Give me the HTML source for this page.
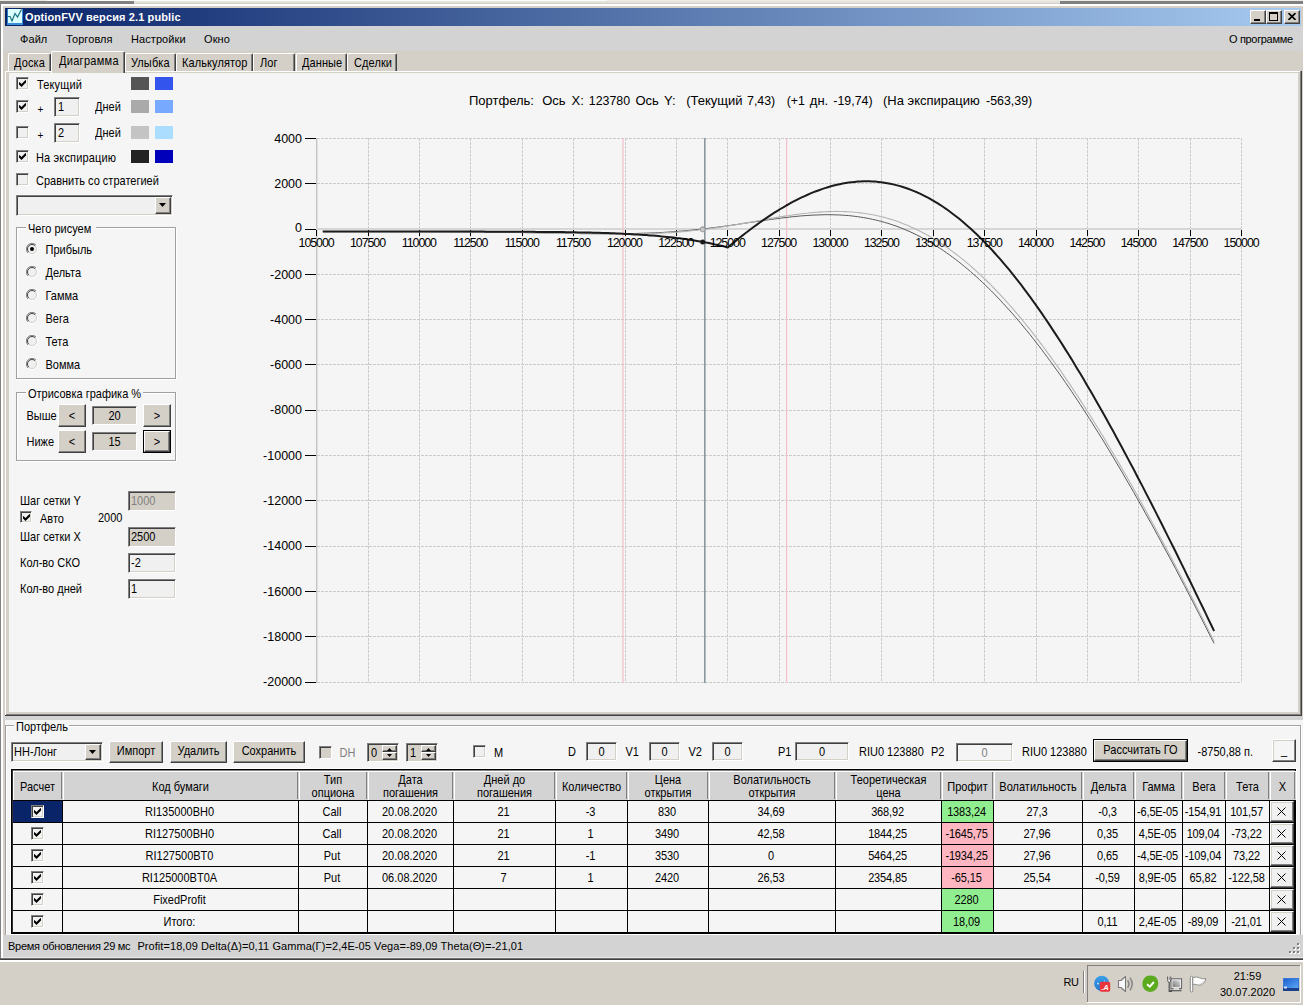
<!DOCTYPE html>
<html><head><meta charset="utf-8"><title>OptionFVV</title>
<style>
html,body{margin:0;padding:0;}
body{width:1303px;height:1005px;overflow:hidden;position:relative;background:#d4d0c8;font-family:"Liberation Sans",sans-serif;font-size:11px;}
body>div,body>span,body>svg{position:absolute;box-sizing:content-box;}
.t{line-height:1;white-space:nowrap;transform-origin:0 84.65%;}
.sk{border:2px solid;border-color:#808080 #fff #fff #808080;box-shadow:inset 1px 1px 0 #404040, inset -1px -1px 0 #d4d0c8;border-width:1px;padding:1px;background-clip:padding-box;}
.rs{border:1px solid;border-color:#fff #404040 #404040 #fff;box-shadow:inset -1px -1px 0 #808080, inset 1px 1px 0 #d4d0c8;padding:1px;}
svg text{font-family:"Liberation Sans",sans-serif;fill:#000;}
</style></head><body>
<div style="left:0;top:0;width:1303px;height:1005px;background:#d4d0c8"></div>
<div style="left:0px;top:0px;width:1303px;height:1px;background:#ecebe6;"></div>
<div style="left:47px;top:0px;width:560px;height:1px;background:#fbfbfa;"></div>
<div style="left:0px;top:1px;width:134px;height:3px;background:#808080;"></div>
<div style="left:134px;top:1px;width:926px;height:2px;background:#e4e2dc;"></div>
<div style="left:1060px;top:1px;width:243px;height:3px;background:#808080;"></div>
<div style="left:134px;top:3px;width:926px;height:1px;background:#d4d0c8;"></div>
<div style="left:1px;top:4px;width:1302px;height:2px;background:#fff;"></div>
<div style="left:0px;top:3px;width:1px;height:957px;background:#808080;"></div>
<div style="left:1px;top:4px;width:2px;height:955px;background:#fff;"></div>
<div style="left:5px;top:8px;width:1296px;height:18px;background:linear-gradient(to right,#0a246a,#a6caf0);"></div>
<svg style="left:7px;top:9px" width="16" height="16" viewBox="0 0 16 16"><rect x="0" y="0" width="16" height="16" fill="#3a8ed8"/><rect x="0" y="0" width="15" height="14" fill="#dcffff"/><rect x="0" y="0" width="1" height="14" fill="#2a7ac8"/><path d="M0.5 7.5 L3 7.5 L5 12 L8 4.5 L10.5 8 L14.5 0.5" stroke="#1a7080" stroke-width="1.2" fill="none"/></svg>
<span class="t" style="left:25px;top:12.19px;font-size:11px;color:#fff;letter-spacing:0.12px;font-weight:bold;transform:scaleY(1.02);">OptionFVV версия 2.1 public</span>
<div class="rs" style="left:1250px;top:10px;width:12px;height:10px;background:#d4d0c8"></div>
<div style="left:1254px;top:19px;width:6px;height:2px;background:#000;"></div>
<div class="rs" style="left:1266px;top:10px;width:12px;height:10px;background:#d4d0c8"></div>
<div style="left:1269px;top:12px;width:7px;height:6px;border:1px solid #000;border-top-width:2px"></div>
<div class="rs" style="left:1284px;top:10px;width:12px;height:10px;background:#d4d0c8"></div>
<svg style="left:1288px;top:13px" width="8" height="7" viewBox="0 0 8 7"><path d="M0.5 0 L7.5 7 M7.5 0 L0.5 7" stroke="#000" stroke-width="1.6"/></svg>
<div style="left:3px;top:26px;width:1300px;height:25px;background:#d3d3d3;"></div>
<span class="t" style="left:20px;top:34.19px;font-size:11px;color:#000;letter-spacing:0.08px;transform:scaleY(1.02);">Файл</span>
<span class="t" style="left:66px;top:34.19px;font-size:11px;color:#000;letter-spacing:0.08px;transform:scaleY(1.02);">Торговля</span>
<span class="t" style="left:131px;top:34.19px;font-size:11px;color:#000;letter-spacing:0.08px;transform:scaleY(1.02);">Настройки</span>
<span class="t" style="left:204px;top:34.19px;font-size:11px;color:#000;letter-spacing:0.08px;transform:scaleY(1.02);">Окно</span>
<span class="t" style="left:1229px;top:34.19px;font-size:11px;color:#000;letter-spacing:-0.33px;transform:scaleY(1.02);">О программе</span>
<div style="left:5px;top:71px;width:1297px;height:1px;background:#fff;"></div>
<div style="left:5px;top:71px;width:1px;height:645px;background:#fff;"></div>
<div style="left:6px;top:72px;width:1294px;height:642px;background:#d4d0c8;"></div>
<div style="left:1300px;top:71px;width:1px;height:645px;background:#808080;"></div>
<div style="left:1301px;top:71px;width:1px;height:645px;background:#404040;"></div>
<div style="left:6px;top:714px;width:1295px;height:1px;background:#808080;"></div>
<div style="left:5px;top:715px;width:1297px;height:1px;background:#404040;"></div>
<div style="left:9px;top:73px;width:1289px;height:639px;background:#f5f5f5;"></div>
<div style="left:8px;top:53px;width:41px;height:17px;background:#d4d0c8;border-left:1px solid #fff;border-top:1px solid #fff;border-right:1px solid #404040;border-radius:2px 2px 0 0;box-shadow:inset -1px 0 0 #808080"></div>
<span class="t" style="left:14px;top:57.69px;font-size:11px;color:#000;letter-spacing:0.1px;transform:scaleY(1.13);">Доска</span>
<div style="left:125px;top:53px;width:49px;height:17px;background:#d4d0c8;border-left:1px solid #fff;border-top:1px solid #fff;border-right:1px solid #404040;border-radius:2px 2px 0 0;box-shadow:inset -1px 0 0 #808080"></div>
<span class="t" style="left:131px;top:57.69px;font-size:11px;color:#000;letter-spacing:0.1px;transform:scaleY(1.13);">Улыбка</span>
<div style="left:176px;top:53px;width:75px;height:17px;background:#d4d0c8;border-left:1px solid #fff;border-top:1px solid #fff;border-right:1px solid #404040;border-radius:2px 2px 0 0;box-shadow:inset -1px 0 0 #808080"></div>
<span class="t" style="left:182px;top:57.69px;font-size:11px;color:#000;letter-spacing:0.1px;transform:scaleY(1.13);">Калькулятор</span>
<div style="left:253px;top:53px;width:40px;height:17px;background:#d4d0c8;border-left:1px solid #fff;border-top:1px solid #fff;border-right:1px solid #404040;border-radius:2px 2px 0 0;box-shadow:inset -1px 0 0 #808080"></div>
<span class="t" style="left:260px;top:57.69px;font-size:11px;color:#000;letter-spacing:0.1px;transform:scaleY(1.13);">Лог</span>
<div style="left:296px;top:53px;width:49px;height:17px;background:#d4d0c8;border-left:1px solid #fff;border-top:1px solid #fff;border-right:1px solid #404040;border-radius:2px 2px 0 0;box-shadow:inset -1px 0 0 #808080"></div>
<span class="t" style="left:302px;top:57.69px;font-size:11px;color:#000;letter-spacing:0.1px;transform:scaleY(1.13);">Данные</span>
<div style="left:347px;top:53px;width:48px;height:17px;background:#d4d0c8;border-left:1px solid #fff;border-top:1px solid #fff;border-right:1px solid #404040;border-radius:2px 2px 0 0;box-shadow:inset -1px 0 0 #808080"></div>
<span class="t" style="left:354px;top:57.69px;font-size:11px;color:#000;letter-spacing:0.1px;transform:scaleY(1.13);">Сделки</span>
<div style="left:51px;top:51px;width:72px;height:21px;background:#d4d0c8;border-left:1px solid #fff;border-top:1px solid #fff;border-right:1px solid #404040;border-radius:2px 2px 0 0;box-shadow:inset -1px 0 0 #808080"></div>
<span class="t" style="left:59px;top:55.69px;font-size:11px;color:#000;letter-spacing:0.3px;transform:scaleY(1.13);">Диаграмма</span>
<div class="sk" style="left:16px;top:77px;width:9px;height:9px;background:#f0f0f0"></div>
<svg style="left:19px;top:80px" width="7" height="7" viewBox="0 0 7 7"><path d="M0.5 2.5 L2.5 4.5 L6.5 0.5" stroke="#000" stroke-width="2" fill="none" stroke-linecap="square" transform="translate(0,1)"/></svg>
<span class="t" style="left:37px;top:79.69px;font-size:11px;color:#000;letter-spacing:0.15px;transform:scaleY(1.13);">Текущий</span>
<div class="sk" style="left:16px;top:100px;width:9px;height:9px;background:#f0f0f0"></div>
<svg style="left:19px;top:103px" width="7" height="7" viewBox="0 0 7 7"><path d="M0.5 2.5 L2.5 4.5 L6.5 0.5" stroke="#000" stroke-width="2" fill="none" stroke-linecap="square" transform="translate(0,1)"/></svg>
<span class="t" style="left:37.5px;top:104.53px;font-size:10px;color:#000;">+</span>
<div class="sk" style="left:54px;top:97px;width:22px;height:16px;background:#f0f0f0"></div>
<span class="t" style="left:58px;top:102.19px;font-size:11px;color:#000;transform:scaleY(1.13);">1</span>
<span class="t" style="left:95px;top:102.19px;font-size:11px;color:#000;transform:scaleY(1.13);">Дней</span>
<div class="sk" style="left:16px;top:126px;width:9px;height:9px;background:#f0f0f0"></div>
<span class="t" style="left:37.5px;top:130.53px;font-size:10px;color:#000;">+</span>
<div class="sk" style="left:54px;top:123px;width:22px;height:16px;background:#f0f0f0"></div>
<span class="t" style="left:58px;top:128.19px;font-size:11px;color:#000;transform:scaleY(1.13);">2</span>
<span class="t" style="left:95px;top:128.19px;font-size:11px;color:#000;transform:scaleY(1.13);">Дней</span>
<div class="sk" style="left:16px;top:150px;width:9px;height:9px;background:#f0f0f0"></div>
<svg style="left:19px;top:153px" width="7" height="7" viewBox="0 0 7 7"><path d="M0.5 2.5 L2.5 4.5 L6.5 0.5" stroke="#000" stroke-width="2" fill="none" stroke-linecap="square" transform="translate(0,1)"/></svg>
<span class="t" style="left:36px;top:152.69px;font-size:11px;color:#000;letter-spacing:0.15px;transform:scaleY(1.13);">На экспирацию</span>
<div class="sk" style="left:16px;top:173px;width:9px;height:9px;background:#f0f0f0"></div>
<span class="t" style="left:36px;top:176.19px;font-size:11px;color:#000;transform:scaleY(1.13);">Сравнить со стратегией</span>
<div style="left:131px;top:77px;width:18px;height:13px;background:#555555;"></div>
<div style="left:155px;top:77px;width:18px;height:13px;background:#3355ee;"></div>
<div style="left:131px;top:100px;width:18px;height:13px;background:#aaaaaa;"></div>
<div style="left:155px;top:100px;width:18px;height:13px;background:#77aaff;"></div>
<div style="left:131px;top:126px;width:18px;height:13px;background:#c4c4c4;"></div>
<div style="left:155px;top:126px;width:18px;height:13px;background:#aaddff;"></div>
<div style="left:131px;top:150px;width:18px;height:13px;background:#222222;"></div>
<div style="left:155px;top:150px;width:18px;height:13px;background:#0000bb;"></div>
<div class="sk" style="left:16px;top:195px;width:153px;height:17px;background:#f0f0f0"></div>
<div class="rs" style="left:155px;top:197px;width:12px;height:13px;background:#d4d0c8"></div>
<svg style="left:159px;top:203px" width="7" height="4" viewBox="0 0 7 4"><path d="M0 0 L7 0 L3.5 4 Z" fill="#000"/></svg>
<div style="left:16px;top:227px;width:158px;height:150px;border:1px solid #a0a0a0;box-shadow:1px 1px 0 #fff, inset 1px 1px 0 #fff;"></div>
<div style="left:26px;top:225px;width:70px;height:5px;background:#f5f5f5;"></div>
<span class="t" style="left:28px;top:223.69px;font-size:11px;color:#000;transform:scaleY(1.13);">Чего рисуем</span>
<svg style="left:26px;top:242.5px" width="12" height="12" viewBox="0 0 12 12"><circle cx="6" cy="6" r="5.5" fill="#f0f0f0"/><path d="M10 2 A5.5 5.5 0 0 0 2 10" stroke="#808080" stroke-width="1" fill="none"/><path d="M9.2 2.8 A4.5 4.5 0 0 0 2.8 9.2" stroke="#404040" stroke-width="1" fill="none"/><path d="M2 10 A5.5 5.5 0 0 0 10 2" stroke="#fff" stroke-width="1" fill="none"/><path d="M2.8 9.2 A4.5 4.5 0 0 0 9.2 2.8" stroke="#d4d0c8" stroke-width="1" fill="none"/><circle cx="6" cy="6" r="2" fill="#000"/></svg>
<span class="t" style="left:45.5px;top:244.69px;font-size:11px;color:#000;transform:scaleY(1.13);">Прибыль</span>
<svg style="left:26px;top:265.5px" width="12" height="12" viewBox="0 0 12 12"><circle cx="6" cy="6" r="5.5" fill="#f0f0f0"/><path d="M10 2 A5.5 5.5 0 0 0 2 10" stroke="#808080" stroke-width="1" fill="none"/><path d="M9.2 2.8 A4.5 4.5 0 0 0 2.8 9.2" stroke="#404040" stroke-width="1" fill="none"/><path d="M2 10 A5.5 5.5 0 0 0 10 2" stroke="#fff" stroke-width="1" fill="none"/><path d="M2.8 9.2 A4.5 4.5 0 0 0 9.2 2.8" stroke="#d4d0c8" stroke-width="1" fill="none"/></svg>
<span class="t" style="left:45.5px;top:267.69px;font-size:11px;color:#000;transform:scaleY(1.13);">Дельта</span>
<svg style="left:26px;top:288.5px" width="12" height="12" viewBox="0 0 12 12"><circle cx="6" cy="6" r="5.5" fill="#f0f0f0"/><path d="M10 2 A5.5 5.5 0 0 0 2 10" stroke="#808080" stroke-width="1" fill="none"/><path d="M9.2 2.8 A4.5 4.5 0 0 0 2.8 9.2" stroke="#404040" stroke-width="1" fill="none"/><path d="M2 10 A5.5 5.5 0 0 0 10 2" stroke="#fff" stroke-width="1" fill="none"/><path d="M2.8 9.2 A4.5 4.5 0 0 0 9.2 2.8" stroke="#d4d0c8" stroke-width="1" fill="none"/></svg>
<span class="t" style="left:45.5px;top:290.69px;font-size:11px;color:#000;transform:scaleY(1.13);">Гамма</span>
<svg style="left:26px;top:311.5px" width="12" height="12" viewBox="0 0 12 12"><circle cx="6" cy="6" r="5.5" fill="#f0f0f0"/><path d="M10 2 A5.5 5.5 0 0 0 2 10" stroke="#808080" stroke-width="1" fill="none"/><path d="M9.2 2.8 A4.5 4.5 0 0 0 2.8 9.2" stroke="#404040" stroke-width="1" fill="none"/><path d="M2 10 A5.5 5.5 0 0 0 10 2" stroke="#fff" stroke-width="1" fill="none"/><path d="M2.8 9.2 A4.5 4.5 0 0 0 9.2 2.8" stroke="#d4d0c8" stroke-width="1" fill="none"/></svg>
<span class="t" style="left:45.5px;top:313.69px;font-size:11px;color:#000;transform:scaleY(1.13);">Вега</span>
<svg style="left:26px;top:334.5px" width="12" height="12" viewBox="0 0 12 12"><circle cx="6" cy="6" r="5.5" fill="#f0f0f0"/><path d="M10 2 A5.5 5.5 0 0 0 2 10" stroke="#808080" stroke-width="1" fill="none"/><path d="M9.2 2.8 A4.5 4.5 0 0 0 2.8 9.2" stroke="#404040" stroke-width="1" fill="none"/><path d="M2 10 A5.5 5.5 0 0 0 10 2" stroke="#fff" stroke-width="1" fill="none"/><path d="M2.8 9.2 A4.5 4.5 0 0 0 9.2 2.8" stroke="#d4d0c8" stroke-width="1" fill="none"/></svg>
<span class="t" style="left:45.5px;top:336.69px;font-size:11px;color:#000;transform:scaleY(1.13);">Тета</span>
<svg style="left:26px;top:357.5px" width="12" height="12" viewBox="0 0 12 12"><circle cx="6" cy="6" r="5.5" fill="#f0f0f0"/><path d="M10 2 A5.5 5.5 0 0 0 2 10" stroke="#808080" stroke-width="1" fill="none"/><path d="M9.2 2.8 A4.5 4.5 0 0 0 2.8 9.2" stroke="#404040" stroke-width="1" fill="none"/><path d="M2 10 A5.5 5.5 0 0 0 10 2" stroke="#fff" stroke-width="1" fill="none"/><path d="M2.8 9.2 A4.5 4.5 0 0 0 9.2 2.8" stroke="#d4d0c8" stroke-width="1" fill="none"/></svg>
<span class="t" style="left:45.5px;top:359.69px;font-size:11px;color:#000;transform:scaleY(1.13);">Вомма</span>
<div style="left:16px;top:392px;width:158px;height:67px;border:1px solid #a0a0a0;box-shadow:1px 1px 0 #fff, inset 1px 1px 0 #fff;"></div>
<div style="left:26px;top:390px;width:117px;height:5px;background:#f5f5f5;"></div>
<span class="t" style="left:28px;top:388.69px;font-size:11px;color:#000;transform:scaleY(1.13);">Отрисовка графика %</span>
<span class="t" style="left:26.5px;top:411.19px;font-size:11px;color:#000;transform:scaleY(1.13);">Выше</span>
<span class="t" style="left:26.5px;top:437.19px;font-size:11px;color:#000;transform:scaleY(1.13);">Ниже</span>
<div class="rs" style="left:58px;top:404px;width:24px;height:19px;background:#d4d0c8"></div>
<span class="t" style="left:58px;top:410.69px;font-size:11px;color:#000;width:28px;text-align:center;transform:scaleY(1.13);">&lt;</span>
<div class="rs" style="left:143px;top:404px;width:24px;height:19px;background:#d4d0c8"></div>
<span class="t" style="left:143px;top:410.69px;font-size:11px;color:#000;width:28px;text-align:center;transform:scaleY(1.13);">&gt;</span>
<div class="rs" style="left:58px;top:430px;width:24px;height:19px;background:#d4d0c8"></div>
<span class="t" style="left:58px;top:436.69px;font-size:11px;color:#000;width:28px;text-align:center;transform:scaleY(1.13);">&lt;</span>
<div style="left:143px;top:430px;width:28px;height:23px;background:#000"></div>
<div class="rs" style="left:144px;top:431px;width:22px;height:17px;background:#d4d0c8"></div>
<span class="t" style="left:143px;top:436.69px;font-size:11px;color:#000;width:28px;text-align:center;transform:scaleY(1.13);">&gt;</span>
<div class="sk" style="left:92px;top:406px;width:41px;height:15px;background:#d4d0c8"></div>
<span class="t" style="left:92px;top:411.19px;font-size:11px;color:#000;width:45px;text-align:center;transform:scaleY(1.13);">20</span>
<div class="sk" style="left:92px;top:432px;width:41px;height:15px;background:#d4d0c8"></div>
<span class="t" style="left:92px;top:437.19px;font-size:11px;color:#000;width:45px;text-align:center;transform:scaleY(1.13);">15</span>
<span class="t" style="left:20px;top:496.19px;font-size:11px;color:#000;transform:scaleY(1.13);">Шаг сетки Y</span>
<div class="sk" style="left:128px;top:491px;width:44px;height:16px;background:#d4d0c8"></div>
<span class="t" style="left:131px;top:496.19px;font-size:11px;color:#808080;transform:scaleY(1.13);">1000</span>
<div class="sk" style="left:20px;top:511px;width:8px;height:8px;background:#f0f0f0"></div>
<svg style="left:23px;top:514px" width="7" height="7" viewBox="0 0 7 7"><path d="M0.5 2.5 L2.5 4.5 L6.5 0.5" stroke="#000" stroke-width="2" fill="none" stroke-linecap="square" transform="translate(0,1)"/></svg>
<span class="t" style="left:40px;top:513.69px;font-size:11px;color:#000;transform:scaleY(1.13);">Авто</span>
<span class="t" style="left:98px;top:513.19px;font-size:11px;color:#000;transform:scaleY(1.13);">2000</span>
<span class="t" style="left:20px;top:532.19px;font-size:11px;color:#000;transform:scaleY(1.13);">Шаг сетки X</span>
<div class="sk" style="left:128px;top:527px;width:44px;height:16px;background:#d4d0c8"></div>
<span class="t" style="left:131px;top:532.19px;font-size:11px;color:#000;transform:scaleY(1.13);">2500</span>
<span class="t" style="left:20px;top:557.69px;font-size:11px;color:#000;transform:scaleY(1.13);">Кол-во СКО</span>
<div class="sk" style="left:128px;top:553px;width:44px;height:16px;background:#f0f0f0"></div>
<span class="t" style="left:131px;top:558.19px;font-size:11px;color:#000;transform:scaleY(1.13);">-2</span>
<span class="t" style="left:20px;top:583.69px;font-size:11px;color:#000;transform:scaleY(1.13);">Кол-во дней</span>
<div class="sk" style="left:128px;top:579px;width:44px;height:16px;background:#f0f0f0"></div>
<span class="t" style="left:131px;top:584.19px;font-size:11px;color:#000;transform:scaleY(1.13);">1</span>
<svg style="left:0;top:0" width="1303" height="720" viewBox="0 0 1303 720"><path d="M368.5 138 V683 M419.5 138 V683 M470.5 138 V683 M522.5 138 V683 M573.5 138 V683 M625.5 138 V683 M676.5 138 V683 M727.5 138 V683 M779.5 138 V683 M830.5 138 V683 M881.5 138 V683 M933.5 138 V683 M984.5 138 V683 M1036.5 138 V683 M1087.5 138 V683 M1138.5 138 V683 M1190.5 138 V683 M1241.5 138 V683 M317 138.5 H1242 M317 183.5 H1242 M317 274.5 H1242 M317 319.5 H1242 M317 364.5 H1242 M317 410.5 H1242 M317 455.5 H1242 M317 500.5 H1242 M317 546.5 H1242 M317 591.5 H1242 M317 636.5 H1242 M317 682.5 H1242" stroke="#cbcbcb" stroke-width="1" stroke-dasharray="3 1" fill="none" shape-rendering="crispEdges"/><rect x="316" y="138" width="1.4" height="545" fill="#c4c4c4"/><rect x="316" y="228" width="926" height="2" fill="#d6d6d6"/><path d="M623.0 138 V683" stroke="#f3bfc9" stroke-width="1.2"/><path d="M786.6 138 V683" stroke="#f3bfc9" stroke-width="1.2"/><path d="M704.8 138 V683" stroke="#8a979f" stroke-width="1.6"/><path d="M305 138.5 H316 M305 183.5 H316 M305 229.5 H316 M305 274.5 H316 M305 319.5 H316 M305 364.5 H316 M305 410.5 H316 M305 455.5 H316 M305 500.5 H316 M305 546.5 H316 M305 591.5 H316 M305 636.5 H316 M305 682.5 H316 M316.5 230 V236 M368.5 230 V236 M419.5 230 V236 M470.5 230 V236 M522.5 230 V236 M573.5 230 V236 M625.5 230 V236 M676.5 230 V236 M727.5 230 V236 M779.5 230 V236 M830.5 230 V236 M881.5 230 V236 M933.5 230 V236 M984.5 230 V236 M1036.5 230 V236 M1087.5 230 V236 M1138.5 230 V236 M1190.5 230 V236 M1241.5 230 V236" stroke="#000" stroke-width="1" fill="none"/><polyline points="322.8,231.6 325.8,231.6 328.8,231.6 331.7,231.6 334.7,231.6 337.7,231.6 340.7,231.6 343.6,231.6 346.6,231.6 349.6,231.6 352.5,231.6 355.5,231.6 358.5,231.6 361.4,231.6 364.4,231.6 367.4,231.6 370.4,231.6 373.3,231.6 376.3,231.6 379.3,231.6 382.2,231.6 385.2,231.6 388.2,231.6 391.2,231.7 394.1,231.7 397.1,231.7 400.1,231.7 403.0,231.7 406.0,231.7 409.0,231.7 412.0,231.7 414.9,231.7 417.9,231.7 420.9,231.7 423.8,231.7 426.8,231.7 429.8,231.8 432.7,231.8 435.7,231.8 438.7,231.8 441.7,231.8 444.6,231.8 447.6,231.8 450.6,231.9 453.5,231.9 456.5,231.9 459.5,231.9 462.5,231.9 465.4,231.9 468.4,232.0 471.4,232.0 474.3,232.0 477.3,232.0 480.3,232.1 483.3,232.1 486.2,232.1 489.2,232.2 492.2,232.2 495.1,232.2 498.1,232.3 501.1,232.3 504.0,232.3 507.0,232.4 510.0,232.4 513.0,232.5 515.9,232.5 518.9,232.5 521.9,232.6 524.8,232.6 527.8,232.7 530.8,232.7 533.8,232.8 536.7,232.8 539.7,232.9 542.7,232.9 545.6,233.0 548.6,233.0 551.6,233.1 554.5,233.1 557.5,233.2 560.5,233.2 563.5,233.3 566.4,233.3 569.4,233.4 572.4,233.4 575.3,233.5 578.3,233.5 581.3,233.6 584.3,233.6 587.2,233.6 590.2,233.7 593.2,233.7 596.1,233.7 599.1,233.7 602.1,233.7 605.1,233.8 608.0,233.8 611.0,233.8 614.0,233.7 616.9,233.7 619.9,233.7 622.9,233.7 625.8,233.6 628.8,233.6 631.8,233.5 634.8,233.5 637.7,233.4 640.7,233.3 643.7,233.2 646.6,233.1 649.6,233.0 652.6,232.9 655.6,232.8 658.5,232.6 661.5,232.5 664.5,232.3 667.4,232.1 670.4,231.9 673.4,231.7 676.4,231.5 679.3,231.2 682.3,231.0 685.3,230.7 688.2,230.5 691.2,230.2 694.2,229.9 697.1,229.6 700.1,229.2 703.1,228.9 706.1,228.6 709.0,228.2 712.0,227.8 715.0,227.5 717.9,227.1 720.9,226.7 723.9,226.3 726.9,225.9 727.8,225.7 729.8,225.5 732.8,225.0 735.8,224.6 738.7,224.2 741.7,223.7 744.7,223.3 747.7,222.8 750.6,222.4 753.6,222.0 756.6,221.5 759.5,221.1 762.5,220.7 765.5,220.2 768.4,219.8 771.4,219.4 774.4,219.0 777.4,218.6 780.3,218.2 783.3,217.8 786.3,217.5 789.2,217.1 792.2,216.8 795.2,216.5 798.2,216.2 801.1,215.9 804.1,215.7 807.1,215.5 810.0,215.3 813.0,215.1 816.0,215.0 819.0,214.9 821.9,214.8 824.9,214.7 827.9,214.7 830.8,214.7 833.8,214.8 836.8,214.9 839.7,215.0 842.7,215.2 845.7,215.4 848.7,215.6 851.6,215.9 854.6,216.3 857.6,216.7 860.5,217.1 863.5,217.6 866.5,218.1 869.5,218.7 872.4,219.3 875.4,219.9 878.4,220.7 881.3,221.4 884.3,222.3 887.3,223.2 890.3,224.1 893.2,225.1 896.2,226.1 899.2,227.2 902.1,228.4 905.1,229.6 908.1,230.9 911.0,232.2 914.0,233.6 917.0,235.1 920.0,236.6 922.9,238.2 925.9,239.8 928.9,241.5 931.8,243.2 934.8,245.0 937.8,246.9 940.8,248.8 943.7,250.8 946.7,252.9 949.7,255.0 952.6,257.2 955.6,259.4 958.6,261.7 961.6,264.1 964.5,266.5 967.5,269.0 970.5,271.5 973.4,274.1 976.4,276.7 979.4,279.5 982.3,282.2 985.3,285.1 988.3,288.0 991.3,290.9 994.2,293.9 997.2,297.0 1000.2,300.1 1003.1,303.3 1006.1,306.6 1009.1,309.9 1012.1,313.2 1015.0,316.6 1018.0,320.1 1021.0,323.6 1023.9,327.2 1026.9,330.8 1029.9,334.5 1032.9,338.2 1035.8,342.0 1038.8,345.8 1041.8,349.7 1044.7,353.7 1047.7,357.7 1050.7,361.7 1053.6,365.8 1056.6,369.9 1059.6,374.1 1062.6,378.3 1065.5,382.6 1068.5,386.9 1071.5,391.3 1074.4,395.7 1077.4,400.2 1080.4,404.7 1083.4,409.2 1086.3,413.8 1089.3,418.5 1092.3,423.1 1095.2,427.9 1098.2,432.6 1101.2,437.4 1104.2,442.2 1107.1,447.1 1110.1,452.0 1113.1,457.0 1116.0,462.0 1119.0,467.0 1122.0,472.0 1124.9,477.1 1127.9,482.3 1130.9,487.4 1133.9,492.6 1136.8,497.8 1139.8,503.1 1142.8,508.4 1145.7,513.7 1148.7,519.1 1151.7,524.4 1154.7,529.9 1157.6,535.3 1160.6,540.8 1163.6,546.3 1166.5,551.8 1169.5,557.3 1172.5,562.9 1175.5,568.5 1178.4,574.1 1181.4,579.8 1184.4,585.5 1187.3,591.2 1190.3,596.9 1193.3,602.6 1196.2,608.4 1199.2,614.2 1202.2,620.0 1205.2,625.8 1208.1,631.7 1211.1,637.5 1214.1,643.4" stroke="#5a5a5a" stroke-width="1" fill="none"/><polyline points="322.8,231.6 325.8,231.6 328.8,231.6 331.7,231.6 334.7,231.6 337.7,231.6 340.7,231.6 343.6,231.6 346.6,231.6 349.6,231.6 352.5,231.6 355.5,231.6 358.5,231.6 361.4,231.6 364.4,231.6 367.4,231.6 370.4,231.6 373.3,231.6 376.3,231.6 379.3,231.6 382.2,231.6 385.2,231.6 388.2,231.6 391.2,231.6 394.1,231.6 397.1,231.6 400.1,231.6 403.0,231.7 406.0,231.7 409.0,231.7 412.0,231.7 414.9,231.7 417.9,231.7 420.9,231.7 423.8,231.7 426.8,231.7 429.8,231.7 432.7,231.7 435.7,231.7 438.7,231.7 441.7,231.8 444.6,231.8 447.6,231.8 450.6,231.8 453.5,231.8 456.5,231.8 459.5,231.8 462.5,231.9 465.4,231.9 468.4,231.9 471.4,231.9 474.3,231.9 477.3,232.0 480.3,232.0 483.3,232.0 486.2,232.0 489.2,232.1 492.2,232.1 495.1,232.1 498.1,232.2 501.1,232.2 504.0,232.2 507.0,232.3 510.0,232.3 513.0,232.4 515.9,232.4 518.9,232.4 521.9,232.5 524.8,232.5 527.8,232.6 530.8,232.6 533.8,232.7 536.7,232.7 539.7,232.8 542.7,232.8 545.6,232.9 548.6,233.0 551.6,233.0 554.5,233.1 557.5,233.1 560.5,233.2 563.5,233.3 566.4,233.3 569.4,233.4 572.4,233.4 575.3,233.5 578.3,233.5 581.3,233.6 584.3,233.7 587.2,233.7 590.2,233.8 593.2,233.8 596.1,233.9 599.1,233.9 602.1,233.9 605.1,234.0 608.0,234.0 611.0,234.0 614.0,234.0 616.9,234.0 619.9,234.0 622.9,234.0 625.8,234.0 628.8,234.0 631.8,234.0 634.8,233.9 637.7,233.9 640.7,233.8 643.7,233.8 646.6,233.7 649.6,233.6 652.6,233.5 655.6,233.4 658.5,233.2 661.5,233.1 664.5,232.9 667.4,232.8 670.4,232.6 673.4,232.4 676.4,232.2 679.3,231.9 682.3,231.7 685.3,231.4 688.2,231.1 691.2,230.8 694.2,230.5 697.1,230.2 700.1,229.8 703.1,229.5 706.1,229.1 709.0,228.7 712.0,228.3 715.0,227.9 717.9,227.5 720.9,227.0 723.9,226.6 726.9,226.1 727.8,226.0 729.8,225.6 732.8,225.2 735.8,224.7 738.7,224.2 741.7,223.6 744.7,223.1 747.7,222.6 750.6,222.1 753.6,221.6 756.6,221.0 759.5,220.5 762.5,220.0 765.5,219.4 768.4,218.9 771.4,218.4 774.4,217.9 777.4,217.4 780.3,216.9 783.3,216.4 786.3,215.9 789.2,215.5 792.2,215.0 795.2,214.6 798.2,214.2 801.1,213.8 804.1,213.5 807.1,213.2 810.0,212.8 813.0,212.6 816.0,212.3 819.0,212.1 821.9,211.9 824.9,211.7 827.9,211.6 830.8,211.5 833.8,211.5 836.8,211.4 839.7,211.5 842.7,211.5 845.7,211.6 848.7,211.8 851.6,212.0 854.6,212.2 857.6,212.5 860.5,212.9 863.5,213.3 866.5,213.7 869.5,214.2 872.4,214.7 875.4,215.3 878.4,216.0 881.3,216.7 884.3,217.4 887.3,218.3 890.3,219.1 893.2,220.1 896.2,221.1 899.2,222.1 902.1,223.2 905.1,224.4 908.1,225.6 911.0,226.9 914.0,228.3 917.0,229.7 920.0,231.2 922.9,232.7 925.9,234.3 928.9,236.0 931.8,237.7 934.8,239.5 937.8,241.3 940.8,243.3 943.7,245.2 946.7,247.3 949.7,249.4 952.6,251.6 955.6,253.8 958.6,256.1 961.6,258.4 964.5,260.9 967.5,263.4 970.5,265.9 973.4,268.5 976.4,271.2 979.4,273.9 982.3,276.7 985.3,279.5 988.3,282.5 991.3,285.4 994.2,288.5 997.2,291.6 1000.2,294.7 1003.1,297.9 1006.1,301.2 1009.1,304.5 1012.1,307.9 1015.0,311.3 1018.0,314.8 1021.0,318.4 1023.9,322.0 1026.9,325.7 1029.9,329.4 1032.9,333.2 1035.8,337.0 1038.8,340.9 1041.8,344.8 1044.7,348.8 1047.7,352.8 1050.7,356.9 1053.6,361.0 1056.6,365.2 1059.6,369.4 1062.6,373.7 1065.5,378.1 1068.5,382.4 1071.5,386.9 1074.4,391.3 1077.4,395.8 1080.4,400.4 1083.4,405.0 1086.3,409.6 1089.3,414.3 1092.3,419.0 1095.2,423.8 1098.2,428.6 1101.2,433.5 1104.2,438.4 1107.1,443.3 1110.1,448.2 1113.1,453.3 1116.0,458.3 1119.0,463.4 1122.0,468.5 1124.9,473.6 1127.9,478.8 1130.9,484.0 1133.9,489.3 1136.8,494.6 1139.8,499.9 1142.8,505.2 1145.7,510.6 1148.7,516.0 1151.7,521.4 1154.7,526.9 1157.6,532.4 1160.6,537.9 1163.6,543.4 1166.5,549.0 1169.5,554.6 1172.5,560.2 1175.5,565.9 1178.4,571.6 1181.4,577.3 1184.4,583.0 1187.3,588.7 1190.3,594.5 1193.3,600.3 1196.2,606.1 1199.2,611.9 1202.2,617.8 1205.2,623.7 1208.1,629.6 1211.1,635.5 1214.1,641.4" stroke="#b4b4b4" stroke-width="1.1" fill="none"/><polyline points="322.8,231.6 325.8,231.6 328.8,231.6 331.7,231.6 334.7,231.6 337.7,231.6 340.7,231.6 343.6,231.6 346.6,231.6 349.6,231.6 352.5,231.6 355.5,231.6 358.5,231.6 361.4,231.6 364.4,231.6 367.4,231.6 370.4,231.6 373.3,231.6 376.3,231.6 379.3,231.6 382.2,231.6 385.2,231.6 388.2,231.6 391.2,231.6 394.1,231.6 397.1,231.6 400.1,231.6 403.0,231.6 406.0,231.6 409.0,231.6 412.0,231.6 414.9,231.6 417.9,231.6 420.9,231.6 423.8,231.6 426.8,231.6 429.8,231.6 432.7,231.6 435.7,231.6 438.7,231.6 441.7,231.6 444.6,231.6 447.6,231.6 450.6,231.6 453.5,231.6 456.5,231.6 459.5,231.6 462.5,231.6 465.4,231.6 468.4,231.6 471.4,231.6 474.3,231.6 477.3,231.6 480.3,231.6 483.3,231.6 486.2,231.7 489.2,231.7 492.2,231.7 495.1,231.7 498.1,231.7 501.1,231.7 504.0,231.7 507.0,231.7 510.0,231.7 513.0,231.7 515.9,231.7 518.9,231.7 521.9,231.8 524.8,231.8 527.8,231.8 530.8,231.8 533.8,231.8 536.7,231.9 539.7,231.9 542.7,231.9 545.6,231.9 548.6,231.9 551.6,232.0 554.5,232.0 557.5,232.0 560.5,232.1 563.5,232.1 566.4,232.2 569.4,232.2 572.4,232.2 575.3,232.3 578.3,232.4 581.3,232.4 584.3,232.5 587.2,232.5 590.2,232.6 593.2,232.7 596.1,232.8 599.1,232.8 602.1,232.9 605.1,233.0 608.0,233.1 611.0,233.2 614.0,233.3 616.9,233.5 619.9,233.6 622.9,233.7 625.8,233.9 628.8,234.0 631.8,234.2 634.8,234.4 637.7,234.5 640.7,234.7 643.7,234.9 646.6,235.1 649.6,235.4 652.6,235.6 655.6,235.8 658.5,236.1 661.5,236.4 664.5,236.7 667.4,237.0 670.4,237.3 673.4,237.6 676.4,238.0 679.3,238.3 682.3,238.7 685.3,239.1 688.2,239.6 691.2,240.0 694.2,240.5 697.1,241.0 700.1,241.5 703.1,242.0 706.1,242.6 709.0,243.1 712.0,243.7 715.0,244.4 717.9,245.0 720.9,245.7 723.9,246.4 726.9,247.2 727.8,247.4 729.8,245.8 732.8,243.3 735.8,240.9 738.7,238.5 741.7,236.1 744.7,233.8 747.7,231.5 750.6,229.2 753.6,227.0 756.6,224.9 759.5,222.7 762.5,220.6 765.5,218.6 768.4,216.6 771.4,214.6 774.4,212.7 777.4,210.8 780.3,209.0 783.3,207.3 786.3,205.5 789.2,203.9 792.2,202.2 795.2,200.7 798.2,199.2 801.1,197.7 804.1,196.3 807.1,195.0 810.0,193.7 813.0,192.4 816.0,191.3 819.0,190.2 821.9,189.1 824.9,188.1 827.9,187.2 830.8,186.3 833.8,185.5 836.8,184.8 839.7,184.2 842.7,183.6 845.7,183.0 848.7,182.6 851.6,182.2 854.6,181.9 857.6,181.6 860.5,181.4 863.5,181.3 866.5,181.3 869.5,181.3 872.4,181.5 875.4,181.6 878.4,181.9 881.3,182.2 884.3,182.7 887.3,183.2 890.3,183.7 893.2,184.4 896.2,185.1 899.2,185.9 902.1,186.8 905.1,187.7 908.1,188.8 911.0,189.9 914.0,191.1 917.0,192.3 920.0,193.7 922.9,195.1 925.9,196.6 928.9,198.2 931.8,199.9 934.8,201.6 937.8,203.4 940.8,205.3 943.7,207.3 946.7,209.3 949.7,211.5 952.6,213.7 955.6,216.0 958.6,218.3 961.6,220.8 964.5,223.3 967.5,225.9 970.5,228.5 973.4,231.3 976.4,234.1 979.4,237.0 982.3,239.9 985.3,243.0 988.3,246.1 991.3,249.2 994.2,252.5 997.2,255.8 1000.2,259.2 1003.1,262.6 1006.1,266.1 1009.1,269.7 1012.1,273.4 1015.0,277.1 1018.0,280.9 1021.0,284.7 1023.9,288.6 1026.9,292.6 1029.9,296.7 1032.9,300.8 1035.8,304.9 1038.8,309.1 1041.8,313.4 1044.7,317.7 1047.7,322.1 1050.7,326.6 1053.6,331.1 1056.6,335.6 1059.6,340.2 1062.6,344.9 1065.5,349.6 1068.5,354.3 1071.5,359.1 1074.4,364.0 1077.4,368.9 1080.4,373.8 1083.4,378.8 1086.3,383.9 1089.3,388.9 1092.3,394.1 1095.2,399.2 1098.2,404.4 1101.2,409.7 1104.2,415.0 1107.1,420.3 1110.1,425.7 1113.1,431.1 1116.0,436.5 1119.0,442.0 1122.0,447.5 1124.9,453.0 1127.9,458.6 1130.9,464.2 1133.9,469.8 1136.8,475.5 1139.8,481.2 1142.8,486.9 1145.7,492.6 1148.7,498.4 1151.7,504.2 1154.7,510.1 1157.6,515.9 1160.6,521.8 1163.6,527.7 1166.5,533.6 1169.5,539.6 1172.5,545.5 1175.5,551.5 1178.4,557.5 1181.4,563.6 1184.4,569.6 1187.3,575.7 1190.3,581.8 1193.3,587.9 1196.2,594.0 1199.2,600.1 1202.2,606.3 1205.2,612.4 1208.1,618.6 1211.1,624.8 1214.1,631.0" stroke="#1c1c1c" stroke-width="2" fill="none" stroke-linejoin="round"/><circle cx="702.7" cy="228.9" r="2.5" fill="#666"/><circle cx="702.7" cy="229.5" r="2.4" fill="#c8c8c8" stroke="#9a9a9a" stroke-width="0.9"/><circle cx="702.7" cy="241.9" r="2.5" fill="#1c1c1c"/><text x="302" y="142.6" text-anchor="end" font-size="12.5">4000</text><text x="302" y="187.9" text-anchor="end" font-size="12.5">2000</text><text x="302" y="231.6" text-anchor="end" font-size="12.5">0</text><text x="302" y="278.5" text-anchor="end" font-size="12.5">-2000</text><text x="302" y="323.8" text-anchor="end" font-size="12.5">-4000</text><text x="302" y="369.1" text-anchor="end" font-size="12.5">-6000</text><text x="302" y="414.4" text-anchor="end" font-size="12.5">-8000</text><text x="302" y="459.7" text-anchor="end" font-size="12.5">-10000</text><text x="302" y="505.0" text-anchor="end" font-size="12.5">-12000</text><text x="302" y="550.3" text-anchor="end" font-size="12.5">-14000</text><text x="302" y="595.6" text-anchor="end" font-size="12.5">-16000</text><text x="302" y="640.9" text-anchor="end" font-size="12.5">-18000</text><text x="302" y="686.2" text-anchor="end" font-size="12.5">-20000</text><text x="316.1" y="246.9" text-anchor="middle" font-size="12.4" letter-spacing="-1.05">105000</text><text x="367.5" y="246.9" text-anchor="middle" font-size="12.4" letter-spacing="-1.05">107500</text><text x="418.9" y="246.9" text-anchor="middle" font-size="12.4" letter-spacing="-1.05">110000</text><text x="470.3" y="246.9" text-anchor="middle" font-size="12.4" letter-spacing="-1.05">112500</text><text x="521.7" y="246.9" text-anchor="middle" font-size="12.4" letter-spacing="-1.05">115000</text><text x="573.0" y="246.9" text-anchor="middle" font-size="12.4" letter-spacing="-1.05">117500</text><text x="624.4" y="246.9" text-anchor="middle" font-size="12.4" letter-spacing="-1.05">120000</text><text x="675.8" y="246.9" text-anchor="middle" font-size="12.4" letter-spacing="-1.05">122500</text><text x="727.2" y="246.9" text-anchor="middle" font-size="12.4" letter-spacing="-1.05">125000</text><text x="778.6" y="246.9" text-anchor="middle" font-size="12.4" letter-spacing="-1.05">127500</text><text x="830.0" y="246.9" text-anchor="middle" font-size="12.4" letter-spacing="-1.05">130000</text><text x="881.4" y="246.9" text-anchor="middle" font-size="12.4" letter-spacing="-1.05">132500</text><text x="932.8" y="246.9" text-anchor="middle" font-size="12.4" letter-spacing="-1.05">135000</text><text x="984.2" y="246.9" text-anchor="middle" font-size="12.4" letter-spacing="-1.05">137500</text><text x="1035.5" y="246.9" text-anchor="middle" font-size="12.4" letter-spacing="-1.05">140000</text><text x="1086.9" y="246.9" text-anchor="middle" font-size="12.4" letter-spacing="-1.05">142500</text><text x="1138.3" y="246.9" text-anchor="middle" font-size="12.4" letter-spacing="-1.05">145000</text><text x="1189.7" y="246.9" text-anchor="middle" font-size="12.4" letter-spacing="-1.05">147500</text><text x="1241.1" y="246.9" text-anchor="middle" font-size="12.4" letter-spacing="-1.05">150000</text><text y="104.8" font-size="12.7"><tspan x="469" font-size="13">Портфель:</tspan> <tspan x="542.2" font-size="13">Ось</tspan> <tspan x="571.6" font-size="13">X:</tspan> <tspan x="588.8" font-size="12.4">123780</tspan> <tspan x="635.5" font-size="13">Ось</tspan> <tspan x="664.1" font-size="13">Y:</tspan> <tspan x="686.2" font-size="13">(Текущий</tspan> <tspan x="747" font-size="12.4">7,43)</tspan> <tspan x="786.7" font-size="12.4">(+1</tspan> <tspan x="809.8" font-size="13">дн.</tspan> <tspan x="833.3" font-size="12.4">-19,74)</tspan> <tspan x="883" font-size="13">(На</tspan> <tspan x="907.5" font-size="13">экспирацию</tspan> <tspan x="986" font-size="12.4">-563,39)</tspan> </text></svg>
<div style="left:3px;top:716px;width:1300px;height:4px;background:#d3d3d3;"></div>
<div style="left:5px;top:720px;width:1298px;height:215px;background:#f5f5f5;"></div>
<div style="left:5px;top:725px;width:1296px;height:1px;background:#a0a0a0;"></div>
<div style="left:6px;top:726px;width:1295px;height:1px;background:#fff;"></div>
<div style="left:5px;top:725px;width:1px;height:210px;background:#a0a0a0;"></div>
<div style="left:6px;top:726px;width:1px;height:209px;background:#fff;"></div>
<div style="left:1300px;top:725px;width:1px;height:210px;background:#a0a0a0;"></div>
<div style="left:1301px;top:725px;width:1px;height:210px;background:#fff;"></div>
<div style="left:14px;top:722px;width:55px;height:6px;background:#f5f5f5;"></div>
<span class="t" style="left:16px;top:721.69px;font-size:11px;color:#000;transform:scaleY(1.13);">Портфель</span>
<div class="sk" style="left:11px;top:742px;width:88px;height:16px;background:#f0f0f0"></div>
<div class="rs" style="left:85px;top:744px;width:12px;height:12px;background:#d4d0c8"></div>
<svg style="left:89px;top:750px" width="7" height="4" viewBox="0 0 7 4"><path d="M0 0 L7 0 L3.5 4 Z" fill="#000"/></svg>
<span class="t" style="left:14px;top:747.19px;font-size:11px;color:#000;transform:scaleY(1.13);">НН-Лонг</span>
<div class="rs" style="left:109px;top:741px;width:50px;height:18px;background:#d4d0c8"></div>
<span class="t" style="left:109px;top:746.19px;font-size:11px;color:#000;width:54px;text-align:center;transform:scaleY(1.13);">Импорт</span>
<div class="rs" style="left:170px;top:741px;width:53px;height:18px;background:#d4d0c8"></div>
<span class="t" style="left:170px;top:746.19px;font-size:11px;color:#000;width:57px;text-align:center;transform:scaleY(1.13);">Удалить</span>
<div class="rs" style="left:233px;top:741px;width:68px;height:18px;background:#d4d0c8"></div>
<span class="t" style="left:233px;top:746.19px;font-size:11px;color:#000;width:72px;text-align:center;transform:scaleY(1.13);">Сохранить</span>
<div class="sk" style="left:319px;top:746px;width:9px;height:9px;background:#d4d0c8"></div>
<span class="t" style="left:339.5px;top:748.19px;font-size:11px;color:#808080;transform:scaleY(1.13);">DH</span>
<div class="sk" style="left:367px;top:743px;width:28px;height:15px;background:#d4d0c8"></div>
<span class="t" style="left:371px;top:748.19px;font-size:11px;color:#000;transform:scaleY(1.13);">0</span>
<div class="rs" style="left:382px;top:745px;width:11px;height:3px;background:#d4d0c8"></div>
<div class="rs" style="left:382px;top:752px;width:11px;height:4px;background:#d4d0c8"></div>
<svg style="left:387px;top:748px" width="5" height="3" viewBox="0 0 5 3"><path d="M0 3 L5 3 L2.5 0 Z" fill="#000"/></svg>
<svg style="left:387px;top:754px" width="5" height="3" viewBox="0 0 5 3"><path d="M0 0 L5 0 L2.5 3 Z" fill="#000"/></svg>
<div class="sk" style="left:406px;top:743px;width:28px;height:15px;background:#d4d0c8"></div>
<span class="t" style="left:410px;top:748.19px;font-size:11px;color:#000;transform:scaleY(1.13);">1</span>
<div class="rs" style="left:421px;top:745px;width:11px;height:3px;background:#d4d0c8"></div>
<div class="rs" style="left:421px;top:752px;width:11px;height:4px;background:#d4d0c8"></div>
<svg style="left:426px;top:748px" width="5" height="3" viewBox="0 0 5 3"><path d="M0 3 L5 3 L2.5 0 Z" fill="#000"/></svg>
<svg style="left:426px;top:754px" width="5" height="3" viewBox="0 0 5 3"><path d="M0 0 L5 0 L2.5 3 Z" fill="#000"/></svg>
<div class="sk" style="left:473px;top:745px;width:9px;height:9px;background:#f0f0f0"></div>
<span class="t" style="left:494px;top:748.19px;font-size:11px;color:#000;transform:scaleY(1.13);">M</span>
<span class="t" style="left:568px;top:746.69px;font-size:11px;color:#000;transform:scaleY(1.13);">D</span>
<div class="sk" style="left:586px;top:742px;width:27px;height:15px;background:#f0f0f0"></div>
<span class="t" style="left:586px;top:746.69px;font-size:11px;color:#000;width:31px;text-align:center;transform:scaleY(1.13);">0</span>
<span class="t" style="left:625.5px;top:746.69px;font-size:11px;color:#000;transform:scaleY(1.13);">V1</span>
<div class="sk" style="left:649px;top:742px;width:27px;height:15px;background:#f0f0f0"></div>
<span class="t" style="left:649px;top:746.69px;font-size:11px;color:#000;width:31px;text-align:center;transform:scaleY(1.13);">0</span>
<span class="t" style="left:688.5px;top:746.69px;font-size:11px;color:#000;transform:scaleY(1.13);">V2</span>
<div class="sk" style="left:712px;top:742px;width:27px;height:15px;background:#f0f0f0"></div>
<span class="t" style="left:712px;top:746.69px;font-size:11px;color:#000;width:31px;text-align:center;transform:scaleY(1.13);">0</span>
<span class="t" style="left:778px;top:746.69px;font-size:11px;color:#000;transform:scaleY(1.13);">P1</span>
<div class="sk" style="left:795px;top:742px;width:50px;height:15px;background:#f0f0f0"></div>
<span class="t" style="left:795px;top:746.69px;font-size:11px;color:#000;width:54px;text-align:center;transform:scaleY(1.13);">0</span>
<span class="t" style="left:859px;top:746.69px;font-size:11px;color:#000;transform:scaleY(1.13);">RIU0 123880</span>
<span class="t" style="left:931px;top:746.69px;font-size:11px;color:#000;transform:scaleY(1.13);">P2</span>
<div class="sk" style="left:956px;top:743px;width:53px;height:15px;background:#f5f5f5"></div>
<span class="t" style="left:956px;top:747.69px;font-size:11px;color:#808080;width:57px;text-align:center;transform:scaleY(1.13);">0</span>
<span class="t" style="left:1022px;top:746.69px;font-size:11px;color:#000;transform:scaleY(1.13);">RIU0 123880</span>
<div style="left:1093px;top:739px;width:95px;height:23px;background:#000"></div>
<div class="rs" style="left:1094px;top:740px;width:89px;height:17px;background:#d4d0c8"></div>
<span class="t" style="left:1093px;top:744.69px;font-size:11px;color:#000;width:95px;text-align:center;transform:scaleY(1.13);">Рассчитать ГО</span>
<span class="t" style="left:1197.5px;top:747.19px;font-size:11px;color:#000;transform:scaleY(1.13);">-8750,88 п.</span>
<div class="rs" style="left:1272px;top:739px;width:20px;height:19px;background:#f5f5f5"></div>
<span class="t" style="left:1272px;top:744.69px;font-size:11px;color:#000;width:24px;text-align:center;transform:scaleY(1.13);">_</span>
<div style="left:10px;top:768px;width:1287px;height:167px;background:#fff;"></div>
<div style="left:11px;top:769px;width:1285px;height:165px;background:#000;"></div>
<div style="left:12px;top:770px;width:1283px;height:163px;background:#808080;"></div>
<div style="left:12px;top:770px;width:1px;height:163px;background:#303030;"></div>
<div style="left:1294px;top:771px;width:1px;height:162px;background:#000;"></div>
<div style="left:13px;top:771px;width:1281px;height:162px;background:#f5f5f5;"></div>
<div style="left:13px;top:771px;width:1283px;height:29px;background:#d3d3d3;"></div>
<div style="left:13px;top:771px;width:1px;height:29px;background:#fff;"></div>
<div style="left:61px;top:772px;width:1px;height:27px;background:#808080;"></div>
<span class="t" style="left:13px;top:781.69px;font-size:11px;color:#000;width:49px;text-align:center;transform:scaleY(1.13);">Расчет</span>
<div style="left:63px;top:771px;width:1px;height:29px;background:#fff;"></div>
<div style="left:297px;top:772px;width:1px;height:27px;background:#808080;"></div>
<span class="t" style="left:63px;top:781.69px;font-size:11px;color:#000;width:235px;text-align:center;transform:scaleY(1.13);">Код бумаги</span>
<div style="left:299px;top:771px;width:1px;height:29px;background:#fff;"></div>
<div style="left:366px;top:772px;width:1px;height:27px;background:#808080;"></div>
<span class="t" style="left:299px;top:774.69px;font-size:11px;color:#000;width:68px;text-align:center;transform:scaleY(1.13);">Тип</span>
<span class="t" style="left:299px;top:787.69px;font-size:11px;color:#000;width:68px;text-align:center;transform:scaleY(1.13);">опциона</span>
<div style="left:368px;top:771px;width:1px;height:29px;background:#fff;"></div>
<div style="left:452px;top:772px;width:1px;height:27px;background:#808080;"></div>
<span class="t" style="left:368px;top:774.69px;font-size:11px;color:#000;width:85px;text-align:center;transform:scaleY(1.13);">Дата</span>
<span class="t" style="left:368px;top:787.69px;font-size:11px;color:#000;width:85px;text-align:center;transform:scaleY(1.13);">погашения</span>
<div style="left:454px;top:771px;width:1px;height:29px;background:#fff;"></div>
<div style="left:554px;top:772px;width:1px;height:27px;background:#808080;"></div>
<span class="t" style="left:454px;top:774.69px;font-size:11px;color:#000;width:101px;text-align:center;transform:scaleY(1.13);">Дней до</span>
<span class="t" style="left:454px;top:787.69px;font-size:11px;color:#000;width:101px;text-align:center;transform:scaleY(1.13);">погашения</span>
<div style="left:556px;top:771px;width:1px;height:29px;background:#fff;"></div>
<div style="left:626px;top:772px;width:1px;height:27px;background:#808080;"></div>
<span class="t" style="left:556px;top:781.69px;font-size:11px;color:#000;width:71px;text-align:center;transform:scaleY(1.13);">Количество</span>
<div style="left:628px;top:771px;width:1px;height:29px;background:#fff;"></div>
<div style="left:707px;top:772px;width:1px;height:27px;background:#808080;"></div>
<span class="t" style="left:628px;top:774.69px;font-size:11px;color:#000;width:80px;text-align:center;transform:scaleY(1.13);">Цена</span>
<span class="t" style="left:628px;top:787.69px;font-size:11px;color:#000;width:80px;text-align:center;transform:scaleY(1.13);">открытия</span>
<div style="left:709px;top:771px;width:1px;height:29px;background:#fff;"></div>
<div style="left:834px;top:772px;width:1px;height:27px;background:#808080;"></div>
<span class="t" style="left:709px;top:774.69px;font-size:11px;color:#000;width:126px;text-align:center;transform:scaleY(1.13);">Волатильность</span>
<span class="t" style="left:709px;top:787.69px;font-size:11px;color:#000;width:126px;text-align:center;transform:scaleY(1.13);">открытия</span>
<div style="left:836px;top:771px;width:1px;height:29px;background:#fff;"></div>
<div style="left:940px;top:772px;width:1px;height:27px;background:#808080;"></div>
<span class="t" style="left:836px;top:774.69px;font-size:11px;color:#000;width:105px;text-align:center;transform:scaleY(1.13);">Теоретическая</span>
<span class="t" style="left:836px;top:787.69px;font-size:11px;color:#000;width:105px;text-align:center;transform:scaleY(1.13);">цена</span>
<div style="left:942px;top:771px;width:1px;height:29px;background:#fff;"></div>
<div style="left:992px;top:772px;width:1px;height:27px;background:#808080;"></div>
<span class="t" style="left:942px;top:781.69px;font-size:11px;color:#000;width:51px;text-align:center;transform:scaleY(1.13);">Профит</span>
<div style="left:994px;top:771px;width:1px;height:29px;background:#fff;"></div>
<div style="left:1081px;top:772px;width:1px;height:27px;background:#808080;"></div>
<span class="t" style="left:994px;top:781.69px;font-size:11px;color:#000;width:88px;text-align:center;transform:scaleY(1.13);">Волатильность</span>
<div style="left:1083px;top:771px;width:1px;height:29px;background:#fff;"></div>
<div style="left:1133px;top:772px;width:1px;height:27px;background:#808080;"></div>
<span class="t" style="left:1083px;top:781.69px;font-size:11px;color:#000;width:51px;text-align:center;transform:scaleY(1.13);">Дельта</span>
<div style="left:1135px;top:771px;width:1px;height:29px;background:#fff;"></div>
<div style="left:1181px;top:772px;width:1px;height:27px;background:#808080;"></div>
<span class="t" style="left:1135px;top:781.69px;font-size:11px;color:#000;width:47px;text-align:center;transform:scaleY(1.13);">Гамма</span>
<div style="left:1183px;top:771px;width:1px;height:29px;background:#fff;"></div>
<div style="left:1224px;top:772px;width:1px;height:27px;background:#808080;"></div>
<span class="t" style="left:1183px;top:781.69px;font-size:11px;color:#000;width:42px;text-align:center;transform:scaleY(1.13);">Вега</span>
<div style="left:1226px;top:771px;width:1px;height:29px;background:#fff;"></div>
<div style="left:1268px;top:772px;width:1px;height:27px;background:#808080;"></div>
<span class="t" style="left:1226px;top:781.69px;font-size:11px;color:#000;width:43px;text-align:center;transform:scaleY(1.13);">Тета</span>
<div style="left:1270px;top:771px;width:1px;height:29px;background:#fff;"></div>
<div style="left:1294px;top:772px;width:1px;height:27px;background:#808080;"></div>
<span class="t" style="left:1270px;top:781.69px;font-size:11px;color:#000;width:25px;text-align:center;transform:scaleY(1.13);">X</span>
<div style="left:13px;top:771px;width:1283px;height:1px;background:#fff;"></div>
<div style="left:13px;top:800px;width:1283px;height:1px;background:#000;"></div>
<div style="left:13px;top:822px;width:1283px;height:1px;background:#000;"></div>
<div style="left:13px;top:844px;width:1283px;height:1px;background:#000;"></div>
<div style="left:13px;top:866px;width:1283px;height:1px;background:#000;"></div>
<div style="left:13px;top:888px;width:1283px;height:1px;background:#000;"></div>
<div style="left:13px;top:910px;width:1283px;height:1px;background:#000;"></div>
<div style="left:13px;top:932px;width:1283px;height:1px;background:#000;"></div>
<div style="left:62px;top:801px;width:1px;height:132px;background:#000;"></div>
<div style="left:298px;top:801px;width:1px;height:132px;background:#000;"></div>
<div style="left:367px;top:801px;width:1px;height:132px;background:#000;"></div>
<div style="left:453px;top:801px;width:1px;height:132px;background:#000;"></div>
<div style="left:555px;top:801px;width:1px;height:132px;background:#000;"></div>
<div style="left:627px;top:801px;width:1px;height:132px;background:#000;"></div>
<div style="left:708px;top:801px;width:1px;height:132px;background:#000;"></div>
<div style="left:835px;top:801px;width:1px;height:132px;background:#000;"></div>
<div style="left:941px;top:801px;width:1px;height:132px;background:#000;"></div>
<div style="left:993px;top:801px;width:1px;height:132px;background:#000;"></div>
<div style="left:1082px;top:801px;width:1px;height:132px;background:#000;"></div>
<div style="left:1134px;top:801px;width:1px;height:132px;background:#000;"></div>
<div style="left:1182px;top:801px;width:1px;height:132px;background:#000;"></div>
<div style="left:1225px;top:801px;width:1px;height:132px;background:#000;"></div>
<div style="left:1269px;top:801px;width:1px;height:132px;background:#000;"></div>
<div style="left:13px;top:801px;width:49px;height:21px;background:#0a246a;"></div>
<div class="sk" style="left:31px;top:805px;width:9px;height:9px;background:#f3f3f3"></div>
<svg style="left:34px;top:808px" width="7" height="7" viewBox="0 0 7 7"><path d="M0.5 2.5 L2.5 4.5 L6.5 0.5" stroke="#000" stroke-width="2" fill="none" stroke-linecap="square" transform="translate(0,1)"/></svg>
<div style="left:942px;top:801px;width:51px;height:21px;background:#90ee90;"></div>
<span class="t" style="left:62px;top:806.69px;font-size:11px;color:#000;width:235px;text-align:center;letter-spacing:0px;transform:scaleY(1.13);">RI135000BH0</span>
<span class="t" style="left:298px;top:806.69px;font-size:11px;color:#000;width:68px;text-align:center;letter-spacing:0px;transform:scaleY(1.13);">Call</span>
<span class="t" style="left:367px;top:806.69px;font-size:11px;color:#000;width:85px;text-align:center;letter-spacing:0px;transform:scaleY(1.13);">20.08.2020</span>
<span class="t" style="left:453px;top:806.69px;font-size:11px;color:#000;width:101px;text-align:center;letter-spacing:-0.15px;transform:scaleY(1.13);">21</span>
<span class="t" style="left:555px;top:806.69px;font-size:11px;color:#000;width:71px;text-align:center;letter-spacing:-0.15px;transform:scaleY(1.13);">-3</span>
<span class="t" style="left:627px;top:806.69px;font-size:11px;color:#000;width:80px;text-align:center;letter-spacing:-0.15px;transform:scaleY(1.13);">830</span>
<span class="t" style="left:708px;top:806.69px;font-size:11px;color:#000;width:126px;text-align:center;letter-spacing:-0.15px;transform:scaleY(1.13);">34,69</span>
<span class="t" style="left:835px;top:806.69px;font-size:11px;color:#000;width:105px;text-align:center;letter-spacing:-0.15px;transform:scaleY(1.13);">368,92</span>
<span class="t" style="left:941px;top:806.69px;font-size:11px;color:#000;width:51px;text-align:center;letter-spacing:-0.15px;transform:scaleY(1.13);">1383,24</span>
<span class="t" style="left:993px;top:806.69px;font-size:11px;color:#000;width:88px;text-align:center;letter-spacing:-0.15px;transform:scaleY(1.13);">27,3</span>
<span class="t" style="left:1082px;top:806.69px;font-size:11px;color:#000;width:51px;text-align:center;letter-spacing:-0.15px;transform:scaleY(1.13);">-0,3</span>
<span class="t" style="left:1134px;top:806.69px;font-size:11px;color:#000;width:47px;text-align:center;letter-spacing:-0.15px;transform:scaleY(1.13);">-6,5E-05</span>
<span class="t" style="left:1182px;top:806.69px;font-size:11px;color:#000;width:42px;text-align:center;letter-spacing:-0.15px;transform:scaleY(1.13);">-154,91</span>
<span class="t" style="left:1225px;top:806.69px;font-size:11px;color:#000;width:43px;text-align:center;letter-spacing:-0.15px;transform:scaleY(1.13);">101,57</span>
<div class="rs" style="left:1270px;top:801px;width:20px;height:17px;background:#f0f0f0"></div>
<svg style="left:1277px;top:807px" width="9" height="9" viewBox="0 0 9 9"><path d="M0.5 0.5 L8.5 8.5 M8.5 0.5 L0.5 8.5" stroke="#000" stroke-width="1"/></svg>
<div class="sk" style="left:31px;top:827px;width:9px;height:9px;background:#f3f3f3"></div>
<svg style="left:34px;top:830px" width="7" height="7" viewBox="0 0 7 7"><path d="M0.5 2.5 L2.5 4.5 L6.5 0.5" stroke="#000" stroke-width="2" fill="none" stroke-linecap="square" transform="translate(0,1)"/></svg>
<div style="left:942px;top:823px;width:51px;height:21px;background:#ffb6c1;"></div>
<span class="t" style="left:62px;top:828.69px;font-size:11px;color:#000;width:235px;text-align:center;letter-spacing:0px;transform:scaleY(1.13);">RI127500BH0</span>
<span class="t" style="left:298px;top:828.69px;font-size:11px;color:#000;width:68px;text-align:center;letter-spacing:0px;transform:scaleY(1.13);">Call</span>
<span class="t" style="left:367px;top:828.69px;font-size:11px;color:#000;width:85px;text-align:center;letter-spacing:0px;transform:scaleY(1.13);">20.08.2020</span>
<span class="t" style="left:453px;top:828.69px;font-size:11px;color:#000;width:101px;text-align:center;letter-spacing:-0.15px;transform:scaleY(1.13);">21</span>
<span class="t" style="left:555px;top:828.69px;font-size:11px;color:#000;width:71px;text-align:center;letter-spacing:-0.15px;transform:scaleY(1.13);">1</span>
<span class="t" style="left:627px;top:828.69px;font-size:11px;color:#000;width:80px;text-align:center;letter-spacing:-0.15px;transform:scaleY(1.13);">3490</span>
<span class="t" style="left:708px;top:828.69px;font-size:11px;color:#000;width:126px;text-align:center;letter-spacing:-0.15px;transform:scaleY(1.13);">42,58</span>
<span class="t" style="left:835px;top:828.69px;font-size:11px;color:#000;width:105px;text-align:center;letter-spacing:-0.15px;transform:scaleY(1.13);">1844,25</span>
<span class="t" style="left:941px;top:828.69px;font-size:11px;color:#000;width:51px;text-align:center;letter-spacing:-0.15px;transform:scaleY(1.13);">-1645,75</span>
<span class="t" style="left:993px;top:828.69px;font-size:11px;color:#000;width:88px;text-align:center;letter-spacing:-0.15px;transform:scaleY(1.13);">27,96</span>
<span class="t" style="left:1082px;top:828.69px;font-size:11px;color:#000;width:51px;text-align:center;letter-spacing:-0.15px;transform:scaleY(1.13);">0,35</span>
<span class="t" style="left:1134px;top:828.69px;font-size:11px;color:#000;width:47px;text-align:center;letter-spacing:-0.15px;transform:scaleY(1.13);">4,5E-05</span>
<span class="t" style="left:1182px;top:828.69px;font-size:11px;color:#000;width:42px;text-align:center;letter-spacing:-0.15px;transform:scaleY(1.13);">109,04</span>
<span class="t" style="left:1225px;top:828.69px;font-size:11px;color:#000;width:43px;text-align:center;letter-spacing:-0.15px;transform:scaleY(1.13);">-73,22</span>
<div class="rs" style="left:1270px;top:823px;width:20px;height:17px;background:#f0f0f0"></div>
<svg style="left:1277px;top:829px" width="9" height="9" viewBox="0 0 9 9"><path d="M0.5 0.5 L8.5 8.5 M8.5 0.5 L0.5 8.5" stroke="#000" stroke-width="1"/></svg>
<div class="sk" style="left:31px;top:849px;width:9px;height:9px;background:#f3f3f3"></div>
<svg style="left:34px;top:852px" width="7" height="7" viewBox="0 0 7 7"><path d="M0.5 2.5 L2.5 4.5 L6.5 0.5" stroke="#000" stroke-width="2" fill="none" stroke-linecap="square" transform="translate(0,1)"/></svg>
<div style="left:942px;top:845px;width:51px;height:21px;background:#ffb6c1;"></div>
<span class="t" style="left:62px;top:850.69px;font-size:11px;color:#000;width:235px;text-align:center;letter-spacing:0px;transform:scaleY(1.13);">RI127500BT0</span>
<span class="t" style="left:298px;top:850.69px;font-size:11px;color:#000;width:68px;text-align:center;letter-spacing:0px;transform:scaleY(1.13);">Put</span>
<span class="t" style="left:367px;top:850.69px;font-size:11px;color:#000;width:85px;text-align:center;letter-spacing:0px;transform:scaleY(1.13);">20.08.2020</span>
<span class="t" style="left:453px;top:850.69px;font-size:11px;color:#000;width:101px;text-align:center;letter-spacing:-0.15px;transform:scaleY(1.13);">21</span>
<span class="t" style="left:555px;top:850.69px;font-size:11px;color:#000;width:71px;text-align:center;letter-spacing:-0.15px;transform:scaleY(1.13);">-1</span>
<span class="t" style="left:627px;top:850.69px;font-size:11px;color:#000;width:80px;text-align:center;letter-spacing:-0.15px;transform:scaleY(1.13);">3530</span>
<span class="t" style="left:708px;top:850.69px;font-size:11px;color:#000;width:126px;text-align:center;letter-spacing:-0.15px;transform:scaleY(1.13);">0</span>
<span class="t" style="left:835px;top:850.69px;font-size:11px;color:#000;width:105px;text-align:center;letter-spacing:-0.15px;transform:scaleY(1.13);">5464,25</span>
<span class="t" style="left:941px;top:850.69px;font-size:11px;color:#000;width:51px;text-align:center;letter-spacing:-0.15px;transform:scaleY(1.13);">-1934,25</span>
<span class="t" style="left:993px;top:850.69px;font-size:11px;color:#000;width:88px;text-align:center;letter-spacing:-0.15px;transform:scaleY(1.13);">27,96</span>
<span class="t" style="left:1082px;top:850.69px;font-size:11px;color:#000;width:51px;text-align:center;letter-spacing:-0.15px;transform:scaleY(1.13);">0,65</span>
<span class="t" style="left:1134px;top:850.69px;font-size:11px;color:#000;width:47px;text-align:center;letter-spacing:-0.15px;transform:scaleY(1.13);">-4,5E-05</span>
<span class="t" style="left:1182px;top:850.69px;font-size:11px;color:#000;width:42px;text-align:center;letter-spacing:-0.15px;transform:scaleY(1.13);">-109,04</span>
<span class="t" style="left:1225px;top:850.69px;font-size:11px;color:#000;width:43px;text-align:center;letter-spacing:-0.15px;transform:scaleY(1.13);">73,22</span>
<div class="rs" style="left:1270px;top:845px;width:20px;height:17px;background:#f0f0f0"></div>
<svg style="left:1277px;top:851px" width="9" height="9" viewBox="0 0 9 9"><path d="M0.5 0.5 L8.5 8.5 M8.5 0.5 L0.5 8.5" stroke="#000" stroke-width="1"/></svg>
<div class="sk" style="left:31px;top:871px;width:9px;height:9px;background:#f3f3f3"></div>
<svg style="left:34px;top:874px" width="7" height="7" viewBox="0 0 7 7"><path d="M0.5 2.5 L2.5 4.5 L6.5 0.5" stroke="#000" stroke-width="2" fill="none" stroke-linecap="square" transform="translate(0,1)"/></svg>
<div style="left:942px;top:867px;width:51px;height:21px;background:#ffb6c1;"></div>
<span class="t" style="left:62px;top:872.69px;font-size:11px;color:#000;width:235px;text-align:center;letter-spacing:0px;transform:scaleY(1.13);">RI125000BT0A</span>
<span class="t" style="left:298px;top:872.69px;font-size:11px;color:#000;width:68px;text-align:center;letter-spacing:0px;transform:scaleY(1.13);">Put</span>
<span class="t" style="left:367px;top:872.69px;font-size:11px;color:#000;width:85px;text-align:center;letter-spacing:0px;transform:scaleY(1.13);">06.08.2020</span>
<span class="t" style="left:453px;top:872.69px;font-size:11px;color:#000;width:101px;text-align:center;letter-spacing:-0.15px;transform:scaleY(1.13);">7</span>
<span class="t" style="left:555px;top:872.69px;font-size:11px;color:#000;width:71px;text-align:center;letter-spacing:-0.15px;transform:scaleY(1.13);">1</span>
<span class="t" style="left:627px;top:872.69px;font-size:11px;color:#000;width:80px;text-align:center;letter-spacing:-0.15px;transform:scaleY(1.13);">2420</span>
<span class="t" style="left:708px;top:872.69px;font-size:11px;color:#000;width:126px;text-align:center;letter-spacing:-0.15px;transform:scaleY(1.13);">26,53</span>
<span class="t" style="left:835px;top:872.69px;font-size:11px;color:#000;width:105px;text-align:center;letter-spacing:-0.15px;transform:scaleY(1.13);">2354,85</span>
<span class="t" style="left:941px;top:872.69px;font-size:11px;color:#000;width:51px;text-align:center;letter-spacing:-0.15px;transform:scaleY(1.13);">-65,15</span>
<span class="t" style="left:993px;top:872.69px;font-size:11px;color:#000;width:88px;text-align:center;letter-spacing:-0.15px;transform:scaleY(1.13);">25,54</span>
<span class="t" style="left:1082px;top:872.69px;font-size:11px;color:#000;width:51px;text-align:center;letter-spacing:-0.15px;transform:scaleY(1.13);">-0,59</span>
<span class="t" style="left:1134px;top:872.69px;font-size:11px;color:#000;width:47px;text-align:center;letter-spacing:-0.15px;transform:scaleY(1.13);">8,9E-05</span>
<span class="t" style="left:1182px;top:872.69px;font-size:11px;color:#000;width:42px;text-align:center;letter-spacing:-0.15px;transform:scaleY(1.13);">65,82</span>
<span class="t" style="left:1225px;top:872.69px;font-size:11px;color:#000;width:43px;text-align:center;letter-spacing:-0.15px;transform:scaleY(1.13);">-122,58</span>
<div class="rs" style="left:1270px;top:867px;width:20px;height:17px;background:#f0f0f0"></div>
<svg style="left:1277px;top:873px" width="9" height="9" viewBox="0 0 9 9"><path d="M0.5 0.5 L8.5 8.5 M8.5 0.5 L0.5 8.5" stroke="#000" stroke-width="1"/></svg>
<div class="sk" style="left:31px;top:893px;width:9px;height:9px;background:#f3f3f3"></div>
<svg style="left:34px;top:896px" width="7" height="7" viewBox="0 0 7 7"><path d="M0.5 2.5 L2.5 4.5 L6.5 0.5" stroke="#000" stroke-width="2" fill="none" stroke-linecap="square" transform="translate(0,1)"/></svg>
<div style="left:942px;top:889px;width:51px;height:21px;background:#90ee90;"></div>
<span class="t" style="left:62px;top:894.69px;font-size:11px;color:#000;width:235px;text-align:center;letter-spacing:0px;transform:scaleY(1.13);">FixedProfit</span>
<span class="t" style="left:941px;top:894.69px;font-size:11px;color:#000;width:51px;text-align:center;letter-spacing:-0.15px;transform:scaleY(1.13);">2280</span>
<div class="rs" style="left:1270px;top:889px;width:20px;height:17px;background:#f0f0f0"></div>
<svg style="left:1277px;top:895px" width="9" height="9" viewBox="0 0 9 9"><path d="M0.5 0.5 L8.5 8.5 M8.5 0.5 L0.5 8.5" stroke="#000" stroke-width="1"/></svg>
<div class="sk" style="left:31px;top:915px;width:9px;height:9px;background:#f3f3f3"></div>
<svg style="left:34px;top:918px" width="7" height="7" viewBox="0 0 7 7"><path d="M0.5 2.5 L2.5 4.5 L6.5 0.5" stroke="#000" stroke-width="2" fill="none" stroke-linecap="square" transform="translate(0,1)"/></svg>
<div style="left:942px;top:911px;width:51px;height:21px;background:#90ee90;"></div>
<span class="t" style="left:62px;top:916.69px;font-size:11px;color:#000;width:235px;text-align:center;letter-spacing:0px;transform:scaleY(1.13);">Итого:</span>
<span class="t" style="left:941px;top:916.69px;font-size:11px;color:#000;width:51px;text-align:center;letter-spacing:-0.15px;transform:scaleY(1.13);">18,09</span>
<span class="t" style="left:1082px;top:916.69px;font-size:11px;color:#000;width:51px;text-align:center;letter-spacing:-0.15px;transform:scaleY(1.13);">0,11</span>
<span class="t" style="left:1134px;top:916.69px;font-size:11px;color:#000;width:47px;text-align:center;letter-spacing:-0.15px;transform:scaleY(1.13);">2,4E-05</span>
<span class="t" style="left:1182px;top:916.69px;font-size:11px;color:#000;width:42px;text-align:center;letter-spacing:-0.15px;transform:scaleY(1.13);">-89,09</span>
<span class="t" style="left:1225px;top:916.69px;font-size:11px;color:#000;width:43px;text-align:center;letter-spacing:-0.15px;transform:scaleY(1.13);">-21,01</span>
<div class="rs" style="left:1270px;top:911px;width:20px;height:17px;background:#f0f0f0"></div>
<svg style="left:1277px;top:917px" width="9" height="9" viewBox="0 0 9 9"><path d="M0.5 0.5 L8.5 8.5 M8.5 0.5 L0.5 8.5" stroke="#000" stroke-width="1"/></svg>
<div style="left:3px;top:935px;width:1300px;height:22px;background:#d3d3d3;"></div>
<span class="t" style="left:8px;top:941.19px;font-size:11px;color:#000;letter-spacing:-0.28px;transform:scaleY(1.03);">Время обновления 29 мс</span>
<span class="t" style="left:137.4px;top:941.19px;font-size:11px;color:#000;letter-spacing:0.07px;transform:scaleY(1.03);">Profit=18,09 Delta(Δ)=0,11 Gamma(Γ)=2,4E-05 Vega=-89,09 Theta(Θ)=-21,01</span>
<svg style="left:1288px;top:942px" width="13" height="13" viewBox="0 0 13 13"><rect x="10" y="2" width="2" height="2" fill="#fff"/><rect x="9" y="1" width="2" height="2" fill="#808080"/><rect x="6" y="6" width="2" height="2" fill="#fff"/><rect x="5" y="5" width="2" height="2" fill="#808080"/><rect x="10" y="6" width="2" height="2" fill="#fff"/><rect x="9" y="5" width="2" height="2" fill="#808080"/><rect x="2" y="10" width="2" height="2" fill="#fff"/><rect x="1" y="9" width="2" height="2" fill="#808080"/><rect x="6" y="10" width="2" height="2" fill="#fff"/><rect x="5" y="9" width="2" height="2" fill="#808080"/><rect x="10" y="10" width="2" height="2" fill="#fff"/><rect x="9" y="9" width="2" height="2" fill="#808080"/></svg>
<div style="left:3px;top:957px;width:1300px;height:1px;background:#e6e6e6;"></div>
<div style="left:0px;top:958px;width:1303px;height:1px;background:#707070;"></div>
<div style="left:0px;top:959px;width:1303px;height:1px;background:#404040;"></div>
<div style="left:0px;top:960px;width:1303px;height:45px;background:#d4d0c8;"></div>
<div style="left:0px;top:960px;width:1303px;height:2px;background:#fff;"></div>
<span class="t" style="left:1063.5px;top:976.69px;font-size:11px;color:#000;letter-spacing:-0.4px;transform:scaleY(1.02);">RU</span>
<div style="left:1083px;top:971px;width:1px;height:22px;background:#808080;"></div>
<div style="left:1084px;top:971px;width:1px;height:22px;background:#fff;"></div>
<div style="left:1087px;top:965px;width:213px;height:1px;background:#808080;"></div>
<div style="left:1087px;top:965px;width:1px;height:37px;background:#808080;"></div>
<div style="left:1087px;top:1002px;width:214px;height:1px;background:#fff;"></div>
<div style="left:1300px;top:965px;width:1px;height:38px;background:#fff;"></div>
<svg style="left:1094px;top:975px" width="17" height="18" viewBox="0 0 17 18"><defs><linearGradient id="bg1" x1="0" y1="0" x2="0" y2="1"><stop offset="0" stop-color="#3aa0e8"/><stop offset="1" stop-color="#2278d0"/></linearGradient></defs><circle cx="7.7" cy="8.4" r="7.6" fill="url(#bg1)"/><circle cx="4" cy="8.6" r="0.9" fill="#d8ecff"/><circle cx="10.5" cy="6" r="0.7" fill="#9fd0f8"/><rect x="5.8" y="6.8" width="10.4" height="10" rx="1.8" fill="#e8343a"/><text x="7.2" y="15.2" font-size="7.6" style="fill:#fff;font-weight:bold;font-style:italic">.A</text></svg>
<svg style="left:1117px;top:975px" width="17" height="18" viewBox="0 0 17 18"><path d="M1.5 5.5 H4 L8.5 1.5 V16.5 L4 12.5 H1.5 Z" fill="#fafafa" stroke="#7a7a7a" stroke-width="1.1" stroke-linejoin="round"/><path d="M10.6 5.2 Q13.4 9 10.6 12.8" stroke="#8a8a8a" stroke-width="1.6" fill="none"/><path d="M13 2.8 Q17.4 9 13 15.2" stroke="#8a8a8a" stroke-width="1.6" fill="none"/></svg>
<svg style="left:1142px;top:975px" width="17" height="18" viewBox="0 0 17 18"><path d="M4.5 1.2 Q9 -0.6 13.3 1.8 Q17 4.6 16 10.5 Q14.5 16.4 8.6 17 Q2.8 16.8 0.8 11.8 Q-0.8 5 4.5 1.2 Z" fill="#5caa1e"/><path d="M5 9.2 L7.8 11.6 L11.9 7" stroke="#fff" stroke-width="1.9" fill="none"/></svg>
<svg style="left:1166px;top:975px" width="17" height="18" viewBox="0 0 17 18"><defs><linearGradient id="mg" x1="0" y1="1" x2="1" y2="0"><stop offset="0" stop-color="#787878"/><stop offset="1" stop-color="#dcdcdc"/></linearGradient></defs><rect x="5" y="3.8" width="10.6" height="9.6" fill="#f2f2f2" stroke="#606060" stroke-width="1"/><rect x="6.5" y="5.3" width="7.6" height="6.6" fill="url(#mg)"/><path d="M4 15.5 H15.5" stroke="#606060" stroke-width="1.6"/><path d="M7.5 14 H13" stroke="#f8f8f8" stroke-width="1.4"/><path d="M1.6 1.5 V4.5 Q1.6 7.5 3.2 7.5 Q4.8 7.5 4.8 4.5 V1.5" stroke="#505050" stroke-width="1" fill="#fff"/><path d="M3.2 1.5 V5" stroke="#505050" stroke-width="0.8"/><path d="M3.2 7.5 V16.3 H6" stroke="#505050" stroke-width="1.2" fill="none"/></svg>
<svg style="left:1189px;top:975px" width="18" height="18" viewBox="0 0 18 18"><rect x="1.3" y="1.3" width="2.4" height="15.6" rx="1" fill="#fdfdfd" stroke="#808080" stroke-width="0.9"/><path d="M3.8 2.6 Q7.5 1.2 10.5 2.8 Q13.5 4.4 17 3.6 Q16 8.5 12.5 9.8 Q9.5 10.6 7.5 9.6 Q5.5 8.8 3.8 9.8 Z" fill="#fcfcfc" stroke="#858585" stroke-width="0.9"/><path d="M12 9.4 Q15 8.2 16.2 4.6 Q14 7.5 11 8.6 Z" fill="#d8d8d8"/></svg>
<span class="t" style="left:1207px;top:970.69px;font-size:11px;color:#000;width:81px;text-align:center;transform:scaleY(1.02);">21:59</span>
<span class="t" style="left:1207px;top:986.69px;font-size:11px;color:#000;width:81px;text-align:center;transform:scaleY(1.02);">30.07.2020</span>
<svg style="left:1283px;top:978px" width="16" height="13" viewBox="0 0 16 13"><defs><linearGradient id="dg" x1="0" y1="0" x2="1" y2="1"><stop offset="0" stop-color="#1f5fd0"/><stop offset="1" stop-color="#5aa8f4"/></linearGradient></defs><rect x="0" y="0" width="16" height="13" fill="#3a78d8"/><rect x="1" y="1" width="14" height="9" fill="url(#dg)"/><rect x="0" y="10" width="16" height="3" fill="#1c3f8c"/><rect x="1" y="8.5" width="3" height="2" fill="#cfe4ff"/></svg>
</body></html>
